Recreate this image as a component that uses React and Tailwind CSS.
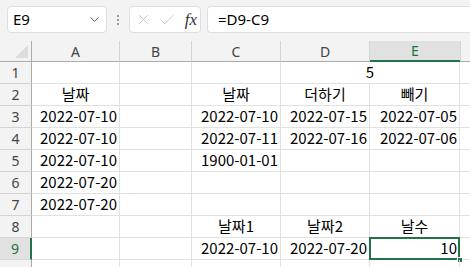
import React from 'react';
import { ChevronDown, X, Check } from 'lucide-react';

const FONT = { fontFamily: '"Noto Sans CJK KR", "Noto Sans", sans-serif' };

const cols = ['A', 'B', 'C', 'D', 'E'];

// each row: cells for A..E, { v, align } ; merged handled separately
const rows = [
  { n: 1, cells: [null, null, null, { v: '5', align: 'center', span: 2 }] },
  { n: 2, cells: [{ v: '날짜', align: 'center' }, null, { v: '날짜', align: 'center' }, { v: '더하기', align: 'center' }, { v: '빼기', align: 'center' }] },
  { n: 3, cells: [{ v: '2022-07-10' }, null, { v: '2022-07-10' }, { v: '2022-07-15' }, { v: '2022-07-05' }] },
  { n: 4, cells: [{ v: '2022-07-10' }, null, { v: '2022-07-11' }, { v: '2022-07-16' }, { v: '2022-07-06' }] },
  { n: 5, cells: [{ v: '2022-07-10' }, null, { v: '1900-01-01' }, null, null] },
  { n: 6, cells: [{ v: '2022-07-20' }, null, null, null, null] },
  { n: 7, cells: [{ v: '2022-07-20' }, null, null, null, null] },
  { n: 8, cells: [null, null, { v: '날짜1', align: 'center' }, { v: '날짜2', align: 'center' }, { v: '날수', align: 'center' }] },
  { n: 9, cells: [null, null, { v: '2022-07-10' }, { v: '2022-07-20' }, { v: '10', sel: true }] },
  // row 10 is only partly in view, its label falls below the edge
  { n: 10, label: '', cells: [null, null, null, null, null] },
];

const Cell = ({ c }) => {
  const span = c && c.span === 2 ? 'col-span-2' : '';
  const align = c && c.align === 'center' ? 'justify-center' : 'justify-end pr-[2px]';
  return (
    <div className={`relative h-[22px] border-r border-b border-[#e1e1e1] flex items-end pb-[1px] ${align} ${span}`}>
      {c && <span className="text-[15px] leading-[20px] text-black">{c.v}</span>}
      {c && c.sel && (
        <>
          <div className="absolute -left-[1px] -top-[1px] -right-[1px] -bottom-[1px] border-2 border-[#217346]" />
          <div className="absolute -right-[4px] -bottom-[4px] w-[6px] h-[6px] bg-[#217346] border border-white" />
        </>
      )}
    </div>
  );
};

export default function App() {
  return (
    <div className="w-[470px] h-[267px] overflow-hidden bg-[#f3f3f3]" style={FONT}>
      {/* formula bar */}
      <div className="flex items-center h-[41px] pt-[6px] pb-[8px] pl-[7px]">
        <div className="w-[100px] h-[27px] bg-white border border-[#dedede] rounded-[4px] flex items-center justify-between pl-[5px] pr-[4px]">
          <span className="text-[15px] text-black" style={{ fontFamily: '"Noto Sans", sans-serif' }}>E9</span>
          <ChevronDown className="w-[15px] h-[15px] text-[#555]" strokeWidth={1.5} />
        </div>
        <div className="w-[22px] flex justify-center">
          <div className="flex flex-col gap-[2px]">
            <div className="w-[2px] h-[2px] bg-[#999]" />
            <div className="w-[2px] h-[2px] bg-[#999]" />
            <div className="w-[2px] h-[2px] bg-[#999]" />
          </div>
        </div>
        <div className="w-[72px] h-[27px] bg-white border border-[#dedede] rounded-[4px] flex items-center pl-[5px] pr-[3px]">
          <X className="w-[17px] h-[17px] text-[#c8c8c8]" strokeWidth={1.2} />
          <Check className="w-[18px] h-[18px] text-[#c8c8c8] ml-[6px]" strokeWidth={1.2} />
          <span className="ml-auto text-[17px] italic text-[#333]" style={{ fontFamily: '"Liberation Serif", serif' }}>fx</span>
        </div>
        <div className="ml-[6px] flex-1 h-[27px] bg-white border-y border-l border-[#dedede] rounded-l-[4px] flex items-center pl-[10px]">
          <span className="text-[15px] text-black" style={{ fontFamily: '"Noto Sans", sans-serif' }}>=D9-C9</span>
        </div>
      </div>

      {/* grid */}
      <div className="grid grid-cols-[32px_88px_72px_89px_89px_90px_1fr] bg-white" style={{ fontFamily: '"Noto Sans CJK KR", sans-serif' }}>
        {/* header row */}
        <div className="relative h-[21px] bg-[#f3f3f3] border-r border-b border-[#ababab]">
          <div className="absolute right-[3px] bottom-[3px] w-0 h-0 border-l-[13px] border-l-transparent border-b-[13px] border-b-[#dcdcdc]" />
        </div>
        {cols.map((c) => (
          <div
            key={c}
            className={`h-[21px] flex items-center justify-center text-[14px] ${
              c === 'E'
                ? 'bg-[#e1e1e1] border-b-2 border-[#217346] text-[#217346]'
                : 'bg-[#f3f3f3] border-r border-b border-r-[#d4d4d4] border-b-[#ababab] text-[#444]'
            }`}
            style={{ fontFamily: '"Noto Sans", sans-serif' }}
          >
            {c}
          </div>
        ))}
        <div className="h-[21px] bg-[#f3f3f3] border-l border-b border-l-[#d4d4d4] border-b-[#ababab]" />

        {rows.map((r) => (
          <React.Fragment key={r.n}>
            <div
              className={`h-[22px] flex items-center justify-center text-[14px] ${
                r.n === 9
                  ? 'bg-[#e1e1e1] border-r-2 border-r-[#217346] border-b border-b-[#d4d4d4] text-[#217346]'
                  : 'bg-[#f3f3f3] border-r border-b border-r-[#ababab] border-b-[#d4d4d4] text-[#444]'
              }`}
              style={{ fontFamily: '"Noto Sans", sans-serif' }}
            >
              {r.label ?? r.n}
            </div>
            {r.cells.map((c, i) => (r.n === 1 && i === 4 ? null : <Cell key={i} c={c} />))}
            <div className="h-[22px] border-b border-[#e1e1e1]" />
          </React.Fragment>
        ))}
      </div>
    </div>
  );
}
